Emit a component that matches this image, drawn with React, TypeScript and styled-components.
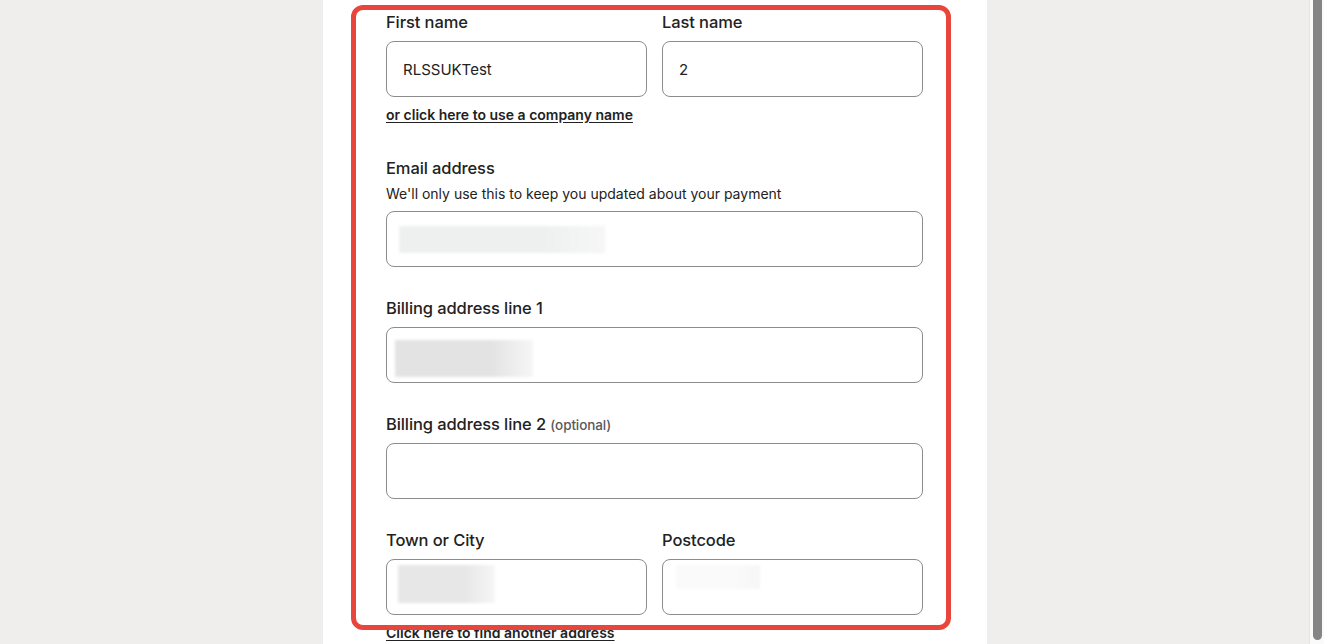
import React from "react";
import styled, { createGlobalStyle } from "styled-components";

const GlobalStyle = createGlobalStyle`
    html, body {
        margin: 0;
        padding: 0;
        height: 100%;
        overflow: hidden;
    }
    body {
        font-family: "Inter", "Liberation Sans", sans-serif;
        color: #222;
        background: #efeeec;
    }
    #root {
        height: 100%;
    }
`;

type RedactProps = {
    $w: number;
    $h: number;
    $x: number;
    $y?: number;
    $tone: string;
};

const App: React.FC = () => {
    return (
        <>
            <GlobalStyle />
            <Screen>
                <Page>
                    <Column>
                        <Form>
                            <Row>
                                <Group>
                                    <Label>First name</Label>
                                    <Field>
                                        <Value>RLSSUKTest</Value>
                                    </Field>
                                </Group>
                                <Group>
                                    <Label>Last name</Label>
                                    <Field>
                                        <Value>2</Value>
                                    </Field>
                                </Group>
                            </Row>
                            <TextLink href="#" $gap={8}>
                                or click here to use a company name
                            </TextLink>

                            <Group $gap={31}>
                                <Label>Email address</Label>
                                <Hint>
                                    We'll only use this to keep you updated
                                    about your payment
                                </Hint>
                                <Field>
                                    <Redacted
                                        $w={206}
                                        $h={27}
                                        $x={12}
                                        $tone="#eef0ef"
                                    />
                                </Field>
                            </Group>

                            <Group $gap={29}>
                                <Label>Billing address line 1</Label>
                                <Field>
                                    <Redacted
                                        $w={138}
                                        $h={37}
                                        $x={8}
                                        $y={3}
                                        $tone="#e3e3e3"
                                    />
                                </Field>
                            </Group>

                            <Group $gap={29}>
                                <Label>
                                    Billing address line 2{" "}
                                    <Optional>(optional)</Optional>
                                </Label>
                                <Field />
                            </Group>

                            <Row $gap={29}>
                                <Group>
                                    <Label>Town or City</Label>
                                    <Field>
                                        <Redacted
                                            $w={97}
                                            $h={38}
                                            $x={11}
                                            $y={-3}
                                            $tone="#e7e7e7"
                                        />
                                    </Field>
                                </Group>
                                <Group>
                                    <Label>Postcode</Label>
                                    <Field>
                                        <Redacted
                                            $w={84}
                                            $h={24}
                                            $x={13}
                                            $y={-10}
                                            $tone="#fafafa"
                                        />
                                    </Field>
                                </Group>
                            </Row>
                            <TextLink href="#" $gap={8}>
                                Click here to find another address
                            </TextLink>

                            <Highlight />
                        </Form>
                    </Column>
                </Page>
                <ScrollTrack>
                    <ScrollThumb />
                </ScrollTrack>
            </Screen>
        </>
    );
};

const Screen = styled.div`
    display: flex;
    width: 1324px;
    height: 644px;
    overflow: hidden;
`;

const Page = styled.div`
    flex: 1;
    min-width: 0;
    display: flex;
    justify-content: center;
    padding-left: 1px;
`;

const Column = styled.div`
    width: 664px;
    flex-shrink: 0;
    height: 100%;
    background: #fff;
    box-sizing: border-box;
    padding: 10px 64px 0 63px;
`;

const Form = styled.div`
    position: relative;
    display: flex;
    flex-flow: column nowrap;
`;

const Row = styled.div<{ $gap?: number }>`
    display: grid;
    grid-template-columns: 1fr 1fr;
    column-gap: 15px;
    margin-top: ${(p) => p.$gap ?? 0}px;
`;

const Group = styled.div<{ $gap?: number }>`
    display: flex;
    flex-flow: column nowrap;
    margin-top: ${(p) => p.$gap ?? 0}px;
`;

const Label = styled.div`
    height: 24px;
    font-size: 16.5px;
    line-height: 24px;
    font-weight: 500;
    color: #222;
    letter-spacing: -0.1px;
    margin-bottom: 7px;
    white-space: nowrap;
`;

const Optional = styled.span`
    font-size: 13.5px;
    line-height: 0;
    font-weight: 500;
    color: #595959;
`;

const Hint = styled.div`
    font-size: 14px;
    line-height: 20px;
    color: #222;
    margin: -3px 0 7px;
`;

const Field = styled.div`
    position: relative;
    display: flex;
    align-items: center;
    height: 56px;
    box-sizing: border-box;
    border: 1px solid #8c8c8c;
    border-radius: 8px;
    padding: 0 16px;
    background: #fff;
    overflow: hidden;
`;

const Value = styled.span`
    font-size: 15px;
    color: #222;
`;

const Redacted = styled.div<RedactProps>`
    width: ${(p) => p.$w}px;
    height: ${(p) => p.$h}px;
    margin-left: ${(p) => p.$x - 16}px;
    transform: translateY(${(p) => p.$y ?? 0}px);
    background: linear-gradient(
        90deg,
        ${(p) => p.$tone} 0%,
        ${(p) => p.$tone} 70%,
        #f6f6f6 100%
    );
    filter: blur(1.5px);
`;

const TextLink = styled.a<{ $gap?: number }>`
    align-self: flex-start;
    margin-top: ${(p) => p.$gap ?? 8}px;
    font-size: 14px;
    line-height: 20px;
    font-weight: 600;
    color: #222;
    text-decoration: underline;
    text-underline-offset: 2px;
`;

// annotation frame drawn over the form
const Highlight = styled.div`
    position: absolute;
    left: -35px;
    right: -28px;
    top: -5px;
    height: 625px;
    border: 5px solid #e8453c;
    border-radius: 12px;
    box-sizing: border-box;
    pointer-events: none;
`;

const ScrollTrack = styled.div`
    display: flex;
    flex: 0 0 15px;
    width: 15px;
    height: 644px;
    background: #fafafa;
    border-left: 1px solid #e4e4e4;
    padding-left: 3px;
    box-sizing: border-box;
`;

const ScrollThumb = styled.div`
    width: 9px;
    height: 640px;
    background: #858585;
    border-radius: 0 0 5px 5px;
`;

export default App;
